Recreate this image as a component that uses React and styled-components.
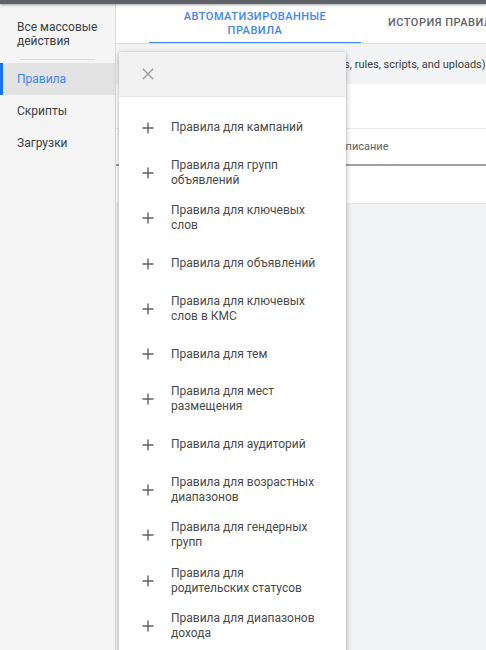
import React from "react";
import styled, { createGlobalStyle } from "styled-components";

const Global = createGlobalStyle`
  html, body { margin: 0; padding: 0; }
  body { font-family: Roboto, "Noto Sans", Arial, sans-serif; background: #fff; overflow: hidden; }
  * { box-sizing: border-box; }
`;

const Page = styled.div`
  width: 486px;
  height: 650px;
  display: flex;
  flex-direction: column;
  overflow: hidden;
`;

const TopBar = styled.div`
  height: 4px;
  background: #5f6368;
  box-shadow: 0 1px 3px rgba(0, 0, 0, 0.35);
  position: relative;
  z-index: 3;
  flex: none;
`;

const Body = styled.div`
  flex: 1;
  display: flex;
  min-height: 0;
`;

const Sidebar = styled.nav`
  width: 116px;
  flex: none;
  background: #f5f5f5;
  border-right: 1px solid #dadce0;
  padding-top: 17px;
  display: flex;
  flex-direction: column;
`;

const NavHeading = styled.div`
  font-size: 12px;
  line-height: 13.5px;
  color: #3c4043;
  padding: 0 8px 0 17px;
`;

const Divider = styled.div`
  height: 1px;
  background: #dadce0;
  margin: 11px 20px 3px 20px;
`;

const NavItem = styled.div`
  height: 32px;
  display: flex;
  align-items: center;
  font-size: 12px;
  color: ${(p) => (p.$active ? "#4285f4" : "#3c4043")};
  background: ${(p) => (p.$active ? "#e3e3e3" : "transparent")};
  border-left: 3px solid ${(p) => (p.$active ? "#1a73e8" : "transparent")};
  padding-left: 14px;
`;

const Main = styled.main`
  flex: 1;
  min-width: 0;
  background: #f1f3f4;
  position: relative;
  display: flex;
  flex-direction: column;
`;

const Tabs = styled.div`
  height: 40px;
  background: #fff;
  border-bottom: 1px solid #dadce0;
  display: flex;
  padding-left: 33px;
  flex: none;
  white-space: nowrap;
  overflow: hidden;
`;

const Tab = styled.div`
  width: ${(p) => p.$w}px;
  flex: none;
  display: flex;
  align-items: center;
  justify-content: ${(p) => (p.$active ? "center" : "flex-start")};
  padding: ${(p) => (p.$active ? "1px 24px 0" : "0 0 0 27px")};
  text-align: center;
  font-size: 11px;
  font-weight: 500;
  line-height: 14px;
  letter-spacing: 0.5px;
  text-transform: uppercase;
  color: ${(p) => (p.$active ? "#4285f4" : "#5f6368")};
  border-bottom: 2px solid ${(p) => (p.$active ? "#4285f4" : "transparent")};
  margin-bottom: -1px;
  white-space: ${(p) => (p.$active ? "normal" : "nowrap")};
`;

const InfoBar = styled.div`
  height: 40px;
  flex: none;
  display: flex;
  align-items: center;
  padding-left: 50px;
  font-size: 11px;
  color: #3c4043;
  white-space: nowrap;
  overflow: hidden;
`;

const Card = styled.div`
  background: #fff;
  flex: none;
`;

const ToolbarRow = styled.div`
  height: 45px;
  border-bottom: 1px solid #e8eaed;
`;

const HeaderRow = styled.div`
  height: 37px;
  display: flex;
  align-items: center;
  border-bottom: 2px solid #a0a0a0;
  font-size: 11px;
  color: #5f6368;
  white-space: nowrap;
`;

const HeaderCell = styled.div`
  width: ${(p) => p.$w}px;
  flex: none;
  padding-left: 12px;
`;

const EmptyRow = styled.div`
  height: 38px;
  border-bottom: 1px solid #e8eaed;
`;

const Menu = styled.div`
  position: absolute;
  left: 3px;
  top: 48px;
  width: 227px;
  height: 640px;
  background: #fff;
  box-shadow: 0 2px 6px rgba(0, 0, 0, 0.28), 0 0 2px rgba(0, 0, 0, 0.12);
  z-index: 2;
`;

const MenuHeader = styled.div`
  height: 45px;
  background: #f1f1f1;
  border-bottom: 1px solid #e6e6e6;
  display: flex;
  align-items: center;
  padding-left: 23px;
`;

const MenuList = styled.ul`
  list-style: none;
  margin: 0;
  padding: 8px 0 0 0;
`;

const MenuItem = styled.li`
  height: 45.3px;
  display: flex;
  align-items: center;
  padding-left: 23px;
`;

const ItemText = styled.span`
  margin-left: 17px;
  width: 152px;
  font-size: 12px;
  line-height: 15px;
  color: #4a4a4a;
`;

const Icon = styled.svg`
  width: 12px;
  height: 12px;
  flex: none;
  stroke: ${(p) => p.$color};
  stroke-width: 1.4;
  fill: none;
`;

const items = [
  "Правила для кампаний",
  "Правила для групп объявлений",
  "Правила для ключевых слов",
  "Правила для объявлений",
  "Правила для ключевых слов в КМС",
  "Правила для тем",
  "Правила для мест размещения",
  "Правила для аудиторий",
  "Правила для возрастных диапазонов",
  "Правила для гендерных групп",
  "Правила для родительских статусов",
  "Правила для диапазонов дохода",
];

const Plus = () => (
  <Icon viewBox="0 0 12 12" $color="#616161">
    <path d="M6 0.5V11.5M0.5 6H11.5" />
  </Icon>
);

const Close = () => (
  <Icon viewBox="0 0 12 12" $color="#9e9e9e">
    <path d="M0.8 0.8L11.2 11.2M11.2 0.8L0.8 11.2" />
  </Icon>
);

export default function App() {
  return (
    <Page>
      <Global />
      <TopBar />
      <Body>
        <Sidebar>
          <NavHeading>Все массовые действия</NavHeading>
          <Divider />
          <NavItem $active>Правила</NavItem>
          <NavItem>Скрипты</NavItem>
          <NavItem>Загрузки</NavItem>
        </Sidebar>
        <Main>
          <Tabs>
            <Tab $active $w={212}>Автоматизированные правила</Tab>
            <Tab $w={200}>История правил</Tab>
          </Tabs>
          <InfoBar>
            Здесь показаны действия (changes, rules, scripts, and uploads) via bulk
          </InfoBar>
          <Card>
            <ToolbarRow />
            <HeaderRow>
              <HeaderCell $w={40} />
              <HeaderCell $w={170}>Правило</HeaderCell>
              <HeaderCell $w={200}>Описание</HeaderCell>
            </HeaderRow>
            <EmptyRow />
          </Card>
          <Menu>
            <MenuHeader>
              <Close />
            </MenuHeader>
            <MenuList>
              {items.map((t) => (
                <MenuItem key={t}>
                  <Plus />
                  <ItemText>{t}</ItemText>
                </MenuItem>
              ))}
            </MenuList>
          </Menu>
        </Main>
      </Body>
    </Page>
  );
}
